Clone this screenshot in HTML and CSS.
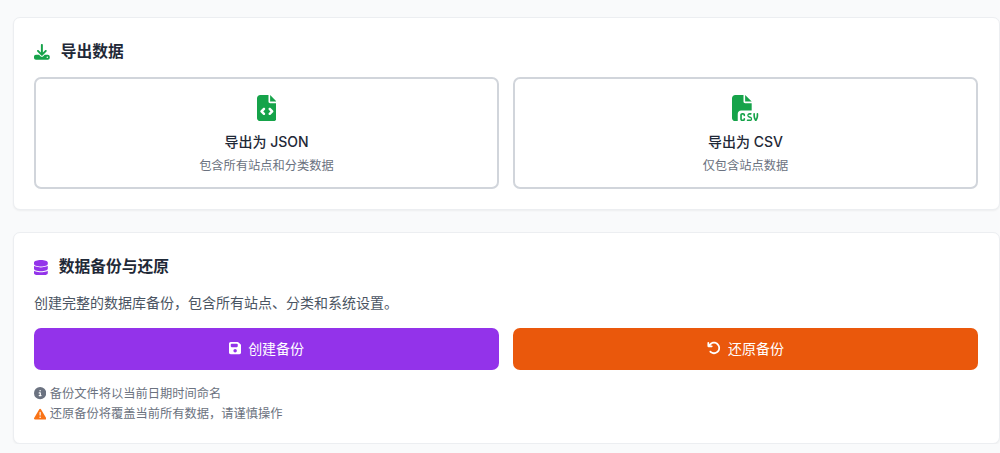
FILE: index.html
```html
<!DOCTYPE html>
<html lang="zh-CN">
<head>
    <meta charset="UTF-8">
    <meta name="viewport" content="width=device-width, initial-scale=1.0">
    <title>数据管理</title>
    <link rel="stylesheet" href="styles.css">
</head>
<body>

    <!-- Export -->
    <section class="card">
        <h2 class="card-title">
            <svg class="icon title-icon green" viewBox="0 0 512 512"><path d="M288 32c0-17.7-14.3-32-32-32s-32 14.3-32 32V274.7l-73.4-73.4c-12.5-12.5-32.8-12.5-45.3 0s-12.5 32.8 0 45.3l128 128c12.5 12.5 32.8 12.5 45.3 0l128-128c12.5-12.5 12.5-32.8 0-45.3s-32.8-12.5-45.3 0L288 274.7V32zM64 352c-35.3 0-64 28.7-64 64v32c0 35.3 28.7 64 64 64H448c35.3 0 64-28.7 64-64V416c0-35.3-28.7-64-64-64H346.5l-45.3 45.3c-25 25-65.5 25-90.5 0L165.5 352H64zm368 56a24 24 0 1 1 0 48 24 24 0 1 1 0-48z"/></svg>
            导出数据
        </h2>
        <div class="two-col">
            <button class="export-btn">
                <svg class="icon export-icon green" viewBox="0 0 384 512"><path d="M64 0C28.7 0 0 28.7 0 64V448c0 35.3 28.7 64 64 64H320c35.3 0 64-28.7 64-64V160H256c-17.7 0-32-14.3-32-32V0H64zM256 0V128H384L256 0zM153 289l-31 31 31 31c9.4 9.4 9.4 24.6 0 33.9s-24.6 9.4-33.9 0L71 337c-9.4-9.4-9.4-24.6 0-33.9l48-48c9.4-9.4 24.6-9.4 33.9 0s9.4 24.6 0 33.9zM265 255l48 48c9.4 9.4 9.4 24.6 0 33.9l-48 48c-9.4 9.4-24.6 9.4-33.9 0s-9.4-24.6 0-33.9l31-31-31-31c-9.4-9.4-9.4-24.6 0-33.9s24.6-9.4 33.9 0z"/></svg>
                <span class="export-name">导出为 JSON</span>
                <span class="export-desc">包含所有站点和分类数据</span>
            </button>
            <button class="export-btn">
                <svg class="icon export-icon green" viewBox="0 0 512 512"><path d="M0 64C0 28.7 28.7 0 64 0H224V128c0 17.7 14.3 32 32 32H384V304H176c-35.3 0-64 28.7-64 64V512H64c-35.3 0-64-28.7-64-64V64zm384 64H256V0L384 128zM200 352h16c22.1 0 40 17.9 40 40v8c0 8.8-7.2 16-16 16s-16-7.2-16-16v-8c0-4.4-3.6-8-8-8H200c-4.4 0-8 3.6-8 8v80c0 4.4 3.6 8 8 8h16c4.4 0 8-3.6 8-8v-8c0-8.8 7.2-16 16-16s16 7.2 16 16v8c0 22.1-17.9 40-40 40H200c-22.1 0-40-17.9-40-40V392c0-22.1 17.9-40 40-40zm133.1 0H368c8.8 0 16 7.2 16 16s-7.2 16-16 16H333.1c-7.2 0-13.1 5.9-13.1 13.1c0 5.2 3 9.9 7.8 12l37.4 16.6c16.3 7.2 26.8 23.4 26.8 41.2c0 24.9-20.2 45.1-45.1 45.1H304c-8.8 0-16-7.2-16-16s7.2-16 16-16h52.9c7.2 0 13.1-5.9 13.1-13.1c0-5.2-3-9.9-7.8-12l-37.4-16.6c-16.3-7.2-26.8-23.4-26.8-41.2c0-24.9 20.2-45.1 45.1-45.1zm98.9 0c8.8 0 16 7.2 16 16v31.6c0 23 5.5 45.6 16 66c10.5-20.3 16-42.9 16-66V368c0-8.8 7.2-16 16-16s16 7.2 16 16v31.6c0 34.7-10.3 68.7-29.6 97.6l-5.1 7.7c-3 4.5-8 7.1-13.3 7.1s-10.3-2.7-13.3-7.1l-5.1-7.7c-19.3-28.9-29.6-62.9-29.6-97.6V368c0-8.8 7.2-16 16-16z"/></svg>
                <span class="export-name">导出为 CSV</span>
                <span class="export-desc">仅包含站点数据</span>
            </button>
        </div>
    </section>

    <!-- Backup and restore -->
    <section class="card">
        <h2 class="card-title">
            <svg class="icon title-icon purple" viewBox="0 0 448 512"><path d="M448 80v48c0 44.2-100.3 80-224 80S0 172.2 0 128V80C0 35.8 100.3 0 224 0S448 35.8 448 80zM393.2 214.7c20.8-7.4 39.9-16.9 54.8-28.6V288c0 44.2-100.3 80-224 80S0 332.2 0 288V186.1c14.9 11.8 34 21.2 54.8 28.6C99.7 230.7 159.5 240 224 240s124.3-9.3 169.2-25.3zM0 346.1c14.9 11.8 34 21.2 54.8 28.6C99.7 390.7 159.5 400 224 400s124.3-9.3 169.2-25.3c20.8-7.4 39.9-16.9 54.8-28.6V432c0 44.2-100.3 80-224 80S0 476.2 0 432V346.1z"/></svg>
            数据备份与还原
        </h2>
        <p class="card-desc">创建完整的数据库备份，包含所有站点、分类和系统设置。</p>
        <div class="two-col">
            <button class="action-btn backup">
                <svg class="icon" viewBox="0 0 448 512"><path d="M64 32C28.7 32 0 60.7 0 96V416c0 35.3 28.7 64 64 64H384c35.3 0 64-28.7 64-64V173.3c0-17-6.7-33.3-18.7-45.3L352 50.7C340 38.7 323.7 32 306.7 32H64zm0 96c0-17.7 14.3-32 32-32H288c17.7 0 32 14.3 32 32v64c0 17.7-14.3 32-32 32H96c-17.7 0-32-14.3-32-32V128zM224 288a64 64 0 1 1 0 128 64 64 0 1 1 0-128z"/></svg>
                创建备份
            </button>
            <button class="action-btn restore">
                <svg class="icon" viewBox="0 0 512 512"><path d="M125.7 160H176c17.7 0 32 14.3 32 32s-14.3 32-32 32H48c-17.7 0-32-14.3-32-32V64c0-17.7 14.3-32 32-32s32 14.3 32 32v51.2L97.6 97.6c87.5-87.5 229.3-87.5 316.8 0s87.5 229.3 0 316.8s-229.3 87.5-316.8 0c-12.5-12.5-12.5-32.8 0-45.3s32.8-12.5 45.3 0c62.5 62.5 163.8 62.5 226.3 0s62.5-163.8 0-226.3s-163.8-62.5-226.3 0L125.7 160z"/></svg>
                还原备份
            </button>
        </div>
        <div class="hints">
            <p class="hint">
                <svg class="icon grey" viewBox="0 0 512 512"><path d="M256 512A256 256 0 1 0 256 0a256 256 0 1 0 0 512zM216 336h24V272H216c-13.3 0-24-10.7-24-24s10.7-24 24-24h48c13.3 0 24 10.7 24 24v88h8c13.3 0 24 10.7 24 24s-10.7 24-24 24H216c-13.3 0-24-10.7-24-24s10.7-24 24-24zm40-208a32 32 0 1 1 0 64 32 32 0 1 1 0-64z"/></svg>
                备份文件将以当前日期时间命名
            </p>
            <p class="hint">
                <svg class="icon orange" viewBox="0 0 512 512"><path d="M256 32c14.2 0 27.3 7.5 34.5 19.8l216 368c7.3 12.4 7.3 27.7 .2 40.1S486.3 480 472 480H40c-14.3 0-27.6-7.7-34.7-20.1s-7-27.8 .2-40.1l216-368C228.7 39.5 241.8 32 256 32zm0 128c-13.3 0-24 10.7-24 24V296c0 13.3 10.7 24 24 24s24-10.7 24-24V184c0-13.3-10.7-24-24-24zm32 224a32 32 0 1 0 -64 0 32 32 0 1 0 64 0z"/></svg>
                还原备份将覆盖当前所有数据，请谨慎操作
            </p>
        </div>
    </section>

</body>
</html>
```

FILE: styles.css
```css
* {
    margin: 0;
    padding: 0;
    box-sizing: border-box;
}

html {
    font-size: 14px;
}

body {
    background: #f9fafb;
    color: #1f2937;
    font-family: Inter, "Noto Sans CJK SC", sans-serif;
    padding: 17px 0.5px 0 12.5px;
    display: flex;
    flex-direction: column;
    gap: 22px;
}

button {
    font-family: inherit;
    cursor: pointer;
}

.icon {
    fill: currentColor;
    height: 1em;
    flex-shrink: 0;
}

.green { color: #16a34a; }
.purple { color: #9333ea; }
.grey { color: #6b7280; }
.orange { color: #f97316; }

.card {
    background: #fff;
    border: 1px solid #eceef1;
    border-radius: 7px;
    box-shadow: 0 1px 2px rgba(0, 0, 0, 0.05);
    padding: 22px 20.5px 20px;
}

.card-title {
    display: flex;
    align-items: center;
    gap: 11px;
    font-size: 1.125rem;
    line-height: 1.75rem;
    font-weight: 600;
    margin-bottom: 12px;
}

.card-desc {
    font-size: 1rem;
    line-height: 1.5rem;
    color: #4b5563;
    margin-bottom: 15px;
}

.two-col {
    display: grid;
    grid-template-columns: 1fr 1fr;
    gap: 14px;
}

.export-btn {
    display: flex;
    flex-direction: column;
    align-items: center;
    background: #fff;
    border: 2px solid #d1d5db;
    border-radius: 7px;
    padding: 14px 14px 13px;
}

.export-icon {
    font-size: 1.875rem;
    margin: 2.5px 0;
}

.export-name {
    margin-top: 7px;
    font-size: 1rem;
    line-height: 1.5rem;
    font-weight: 500;
    color: #1f2937;
}

.export-desc {
    margin-top: 5px;
    font-size: 0.875rem;
    line-height: 1.25rem;
    color: #6b7280;
}

.action-btn {
    display: flex;
    align-items: center;
    justify-content: center;
    gap: 7px;
    height: 42px;
    padding-bottom: 1px;
    border: none;
    border-radius: 7px;
    color: #fff;
    font-size: 1rem;
    font-weight: 400;
}

.backup { background: #9333ea; }
.restore { background: #ea580c; }

.hints {
    margin-top: 15px;
    display: flex;
    flex-direction: column;
    gap: 3px;
}

.hint {
    display: flex;
    align-items: center;
    gap: 3.5px;
    font-size: 0.875rem;
    line-height: 1.25rem;
    color: #6b7280;
}
```
